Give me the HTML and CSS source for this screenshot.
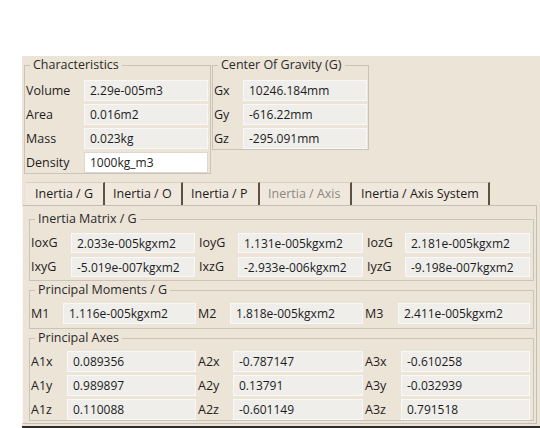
FILE: index.html
```html
<!DOCTYPE html>
<html>

<head>
    <title>Measure Inertia</title>
    <link rel="stylesheet" href="styles.css">
</head>

<body>
    <div class="dialog">
        <div class="top">
            <fieldset class="group chars">
                <legend>Characteristics</legend>
                <div class="rows">
                    <span class="lbl">Volume</span><span class="field">2.29e-005m3</span>
                    <span class="lbl">Area</span><span class="field">0.016m2</span>
                    <span class="lbl">Mass</span><span class="field">0.023kg</span>
                    <span class="lbl">Density</span><span class="field edit">1000kg_m3</span>
                </div>
            </fieldset>
            <fieldset class="group cog">
                <legend>Center Of Gravity (G)</legend>
                <div class="rows">
                    <span class="lbl">Gx</span><span class="field">10246.184mm</span>
                    <span class="lbl">Gy</span><span class="field">-616.22mm</span>
                    <span class="lbl">Gz</span><span class="field">-295.091mm</span>
                </div>
            </fieldset>
        </div>

        <div class="tabs">
            <div class="tab t1 active">Inertia / G</div>
            <div class="tab t2">Inertia / O</div>
            <div class="tab t3">Inertia / P</div>
            <div class="tab t4 disabled">Inertia / Axis</div>
            <div class="tab t5">Inertia / Axis System</div>
        </div>

        <div class="panel">
            <fieldset class="group matrix">
                <legend>Inertia Matrix / G</legend>
                <div class="grid">
                    <span class="lbl">IoxG</span><span class="field">2.033e-005kgxm2</span>
                    <span class="lbl">IoyG</span><span class="field">1.131e-005kgxm2</span>
                    <span class="lbl">IozG</span><span class="field">2.181e-005kgxm2</span>
                    <span class="lbl">IxyG</span><span class="field">-5.019e-007kgxm2</span>
                    <span class="lbl">IxzG</span><span class="field">-2.933e-006kgxm2</span>
                    <span class="lbl">IyzG</span><span class="field">-9.198e-007kgxm2</span>
                </div>
            </fieldset>
            <fieldset class="group moments">
                <legend>Principal Moments / G</legend>
                <div class="grid">
                    <span class="lbl">M1</span><span class="field">1.116e-005kgxm2</span>
                    <span class="lbl">M2</span><span class="field">1.818e-005kgxm2</span>
                    <span class="lbl">M3</span><span class="field">2.411e-005kgxm2</span>
                </div>
            </fieldset>
            <fieldset class="group axes">
                <legend>Principal Axes</legend>
                <div class="grid">
                    <span class="lbl">A1x</span><span class="field">0.089356</span>
                    <span class="lbl">A2x</span><span class="field">-0.787147</span>
                    <span class="lbl">A3x</span><span class="field">-0.610258</span>
                    <span class="lbl">A1y</span><span class="field">0.989897</span>
                    <span class="lbl">A2y</span><span class="field">0.13791</span>
                    <span class="lbl">A3y</span><span class="field">-0.032939</span>
                    <span class="lbl">A1z</span><span class="field">0.110088</span>
                    <span class="lbl">A2z</span><span class="field">-0.601149</span>
                    <span class="lbl">A3z</span><span class="field">0.791518</span>
                </div>
            </fieldset>
        </div>
    </div>
</body>

</html>
```

FILE: styles.css
```css
body {
    margin: 0;
    background-color: white;
    font-family: "Open Sans", "Noto Sans", sans-serif;
    font-size: 12px;
    color: #1c1c1c;
}

.dialog {
    margin: 56px 0 0 22px;
    width: 518px;
    height: 370px;
    background-color: #ede4d8;
    border-bottom: 2px solid #2b2b2b;
}

/* group boxes */
.group {
    margin: 0;
    padding: 0;
    border: 1px solid #c9c3ba;
    min-width: 0;
}

.group legend {
    margin-left: 4px;
    padding: 0 3px;
    height: 16px;
    line-height: 16px;
    font-size: 12.5px;
    color: #2a2a2a;
}

.field {
    display: block;
    height: 21px;
    line-height: 20px;
    padding-left: 5px;
    box-sizing: border-box;
    background-color: #efeeeb;
    border: 1px solid #f9f8f6;
    white-space: nowrap;
    overflow: hidden;
}

.field.edit {
    background-color: white;
    border-color: #dcd7d0;
}

.lbl {
    display: block;
    line-height: 21px;
    font-size: 12.5px;
    white-space: nowrap;
}

/* top row */
.top {
    display: flex;
    align-items: flex-start;
    padding: 1px 0 0 2px;
}

.rows {
    display: grid;
    row-gap: 3px;
}

.chars {
    padding: 7px 2px 0 1px;
}

.chars .rows {
    grid-template-columns: 58px 124px;
}

.cog {
    margin-left: 1px;
    padding: 7px 1px 0 1px;
}

.cog .rows {
    grid-template-columns: 29px 124px;
}

/* tabs */
.tabs {
    display: flex;
    margin: 8px 0 0 4px;
    height: 23px;
}

.tab {
    box-sizing: border-box;
    height: 23px;
    line-height: 22px;
    padding-left: 8px;
    font-size: 12.5px;
    background-color: #f0e8dd;
    border-top: 1px solid #d8d0c5;
    border-right: 2px solid #5f5142;
    white-space: nowrap;
}

.tab.t1 { width: 79px; padding-left: 9px; }
.tab.t2 { width: 78px; }
.tab.t3 { width: 77px; }
.tab.t4 { width: 92px; }
.tab.t5 { width: 138px; padding-left: 9px; }

.tab.disabled {
    color: #8c8883;
}

.panel {
    width: 515px;
    box-sizing: border-box;
    padding: 5px 2px 2px 6px;
    border: 1px solid #c4beb5;
    border-left-color: #faf7f2;
}

.panel .group + .group {
    margin-top: 1px;
}

.grid {
    display: grid;
    column-gap: 2px;
}

.matrix {
    padding: 6px 2px 3px 1px;
}

.matrix .grid {
    grid-template-columns: 36px 124px 35px 125px 34px 125px;
    column-gap: 4px;
    row-gap: 4px;
}

.matrix .field {
    height: 20px;
    line-height: 19px;
}

.matrix .lbl {
    line-height: 20px;
}

.moments {
    padding: 5px 2px 4px 1px;
}

.moments .grid {
    grid-template-columns: 30px 133px 30px 133px 31px 132px;
}

.axes {
    padding: 5px 2px 0 1px;
}

.axes .grid {
    grid-template-columns: 34px 129px 33px 130px 34px 129px;
    row-gap: 3px;
}
```
